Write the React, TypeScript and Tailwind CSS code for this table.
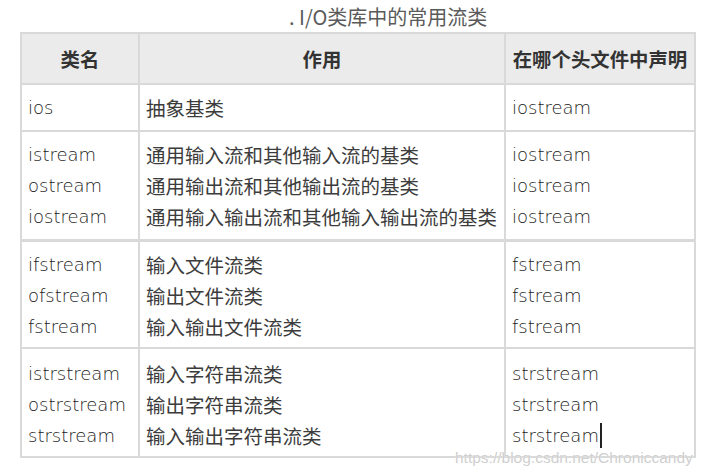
import React from 'react';

const groups = [
  { names: ['ios'], uses: ['抽象基类'], heads: ['iostream'], h: 'h-[47px]', pt: 'pt-[7px]', thick: false },
  {
    names: ['istream', 'ostream', 'iostream'],
    uses: ['通用输入流和其他输入流的基类', '通用输出流和其他输出流的基类', '通用输入输出流和其他输入输出流的基类'],
    heads: ['iostream', 'iostream', 'iostream'],
    h: 'h-[110px]',
    pt: 'pt-[7px]',
    thick: true,
  },
  {
    names: ['ifstream', 'ofstream', 'fstream'],
    uses: ['输入文件流类', '输出文件流类', '输入输出文件流类'],
    heads: ['fstream', 'fstream', 'fstream'],
    h: 'h-[107px]',
    pt: 'pt-[7px]',
    thick: false,
  },
  {
    names: ['istrstream', 'ostrstream', 'strstream'],
    uses: ['输入字符串流类', '输出字符串流类', '输入输出字符串流类'],
    heads: ['strstream', 'strstream', 'strstream'],
    h: 'h-[109px]',
    pt: 'pt-[9px]',
    thick: false,
  },
];

const latin = "font-['DejaVu_Sans','Noto_Sans_CJK_SC',sans-serif] font-extralight text-[#222]";
const cjk = "font-['Noto_Sans_CJK_SC',sans-serif]";

export default function App() {
  return (
    <div className="relative w-[707px] h-[476px] bg-white overflow-hidden text-[#3c3c3c]">
      <div className={`h-[32px] pl-[289px] pt-[1px] text-[20px] leading-[32px] text-[#5a5a5a] ${cjk}`}>
        . I/O类库中的常用流类
      </div>

      <div className="ml-[20px] w-[676px] border-l-2 border-t-2 border-[#d9d9d9]">
        {/* header */}
        <div className={`grid grid-cols-[118px_366px_190px] h-[51px] bg-[#ebebeb] font-bold text-[#333] text-[19.4px] ${cjk}`}>
          <div className="flex items-center justify-center border-r-2 border-b-2 border-[#d9d9d9]">类名</div>
          <div className="flex items-center justify-center border-r-2 border-b-2 border-[#d9d9d9]">作用</div>
          <div className="flex items-center justify-center border-r-2 border-b-2 border-[#d9d9d9]">在哪个头文件中声明</div>
        </div>

        {groups.map((g, gi) => {
          const b = g.thick ? 'border-b-[3px]' : 'border-b-2';
          const last = gi === groups.length - 1;
          return (
            <div key={gi} className={`grid grid-cols-[118px_366px_190px] ${g.h}`}>
              <div className={`border-r-2 ${b} border-[#d9d9d9] pl-[6px] ${g.pt} text-[18px] leading-[31px] ${latin}`}>
                {g.names.map((n) => (
                  <div key={n}>{n}</div>
                ))}
              </div>
              <div className={`border-r-2 ${b} border-[#d9d9d9] pl-[6px] ${g.pt} text-[19.5px] leading-[31px] ${cjk}`}>
                {g.uses.map((u) => (
                  <div key={u}>{u}</div>
                ))}
              </div>
              <div className={`border-r-2 ${b} border-[#d9d9d9] pl-[6px] ${g.pt} text-[18px] leading-[31px] ${latin}`}>
                {g.heads.map((h, i) => (
                  <div key={i} className="flex items-center">
                    {h}
                    {last && i === g.heads.length - 1 && (
                      <span className="inline-block w-[2px] h-[25px] bg-[#222] ml-[1px]" />
                    )}
                  </div>
                ))}
              </div>
            </div>
          );
        })}
      </div>

      <div className="absolute left-[455px] top-[448px] text-[15.5px] leading-[20px] text-[#cfcfcf] font-['Liberation_Sans',sans-serif] [text-shadow:0_0_1px_#fff]">
        https://blog.csdn.net/Chroniccandy
      </div>
    </div>
  );
}
